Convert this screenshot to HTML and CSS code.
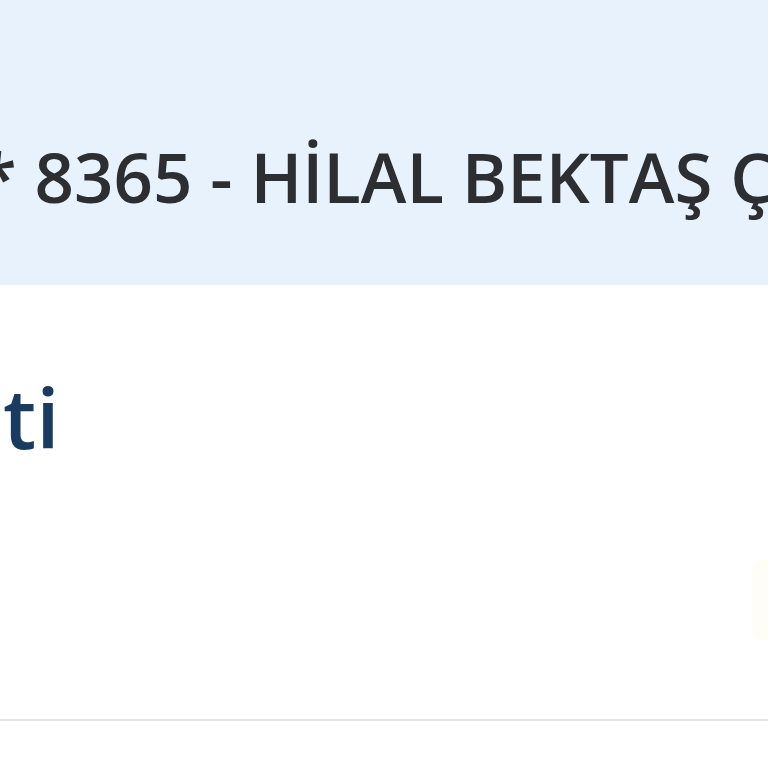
FILE: index.html
```html
<!DOCTYPE html>
<html lang="tr">
  <head>
    <meta charset="UTF-8" />
    <meta name="viewport" content="width=device-width, initial-scale=1.0" />
    <title>Hesap Özeti</title>
    <link rel="stylesheet" href="styles.css">
  </head>
  <body>
    <header class="customer-bar">
      <span class="customer-name">** 8365 - HİLAL BEKTAŞ ÇELİK</span>
    </header>
    <main class="summary">
      <div class="summary-row">
        <h1 class="summary-title"><span class="title-start">Hesap Öze</span>ti</h1>
        <div class="summary-badge"></div>
      </div>
    </main>
  </body>
</html>
```

FILE: styles.css
```css
html,
body {
  margin: 0;
  padding: 0;
}
body {
  font-family: "Open Sans", "Noto Sans", sans-serif;
  background: #ffffff;
  overflow: hidden;
  width: 768px;
  height: 768px;
}
.customer-bar {
  background-color: #e7f2fd;
  height: 285px;
  box-sizing: border-box;
  padding-top: 129px;
  white-space: nowrap;
  overflow: hidden;
}
.customer-name {
  display: inline-block;
  margin-left: -59px;
  font-size: 69px;
  font-weight: 600;
  line-height: 95px;
  color: #2c2e31;
}
.summary {
  height: 434px;
  border-bottom: 2px solid #e6e6e6;
  overflow: hidden;
}
.summary-row {
  display: flex;
  justify-content: space-between;
  align-items: flex-start;
  padding-top: 82px;
}
.summary-title {
  display: flex;
  margin: 0 0 0 3px;
  font-size: 84px;
  font-weight: 600;
  line-height: 100px;
  color: #1b3a5f;
  white-space: nowrap;
}
.title-start {
  display: block;
  width: 0;
  overflow: hidden;
  direction: rtl;
}
.summary-badge {
  width: 80px;
  height: 80px;
  margin-top: 193px;
  margin-right: -64px;
  background-color: #fffef6;
  border-radius: 8px;
}
```
